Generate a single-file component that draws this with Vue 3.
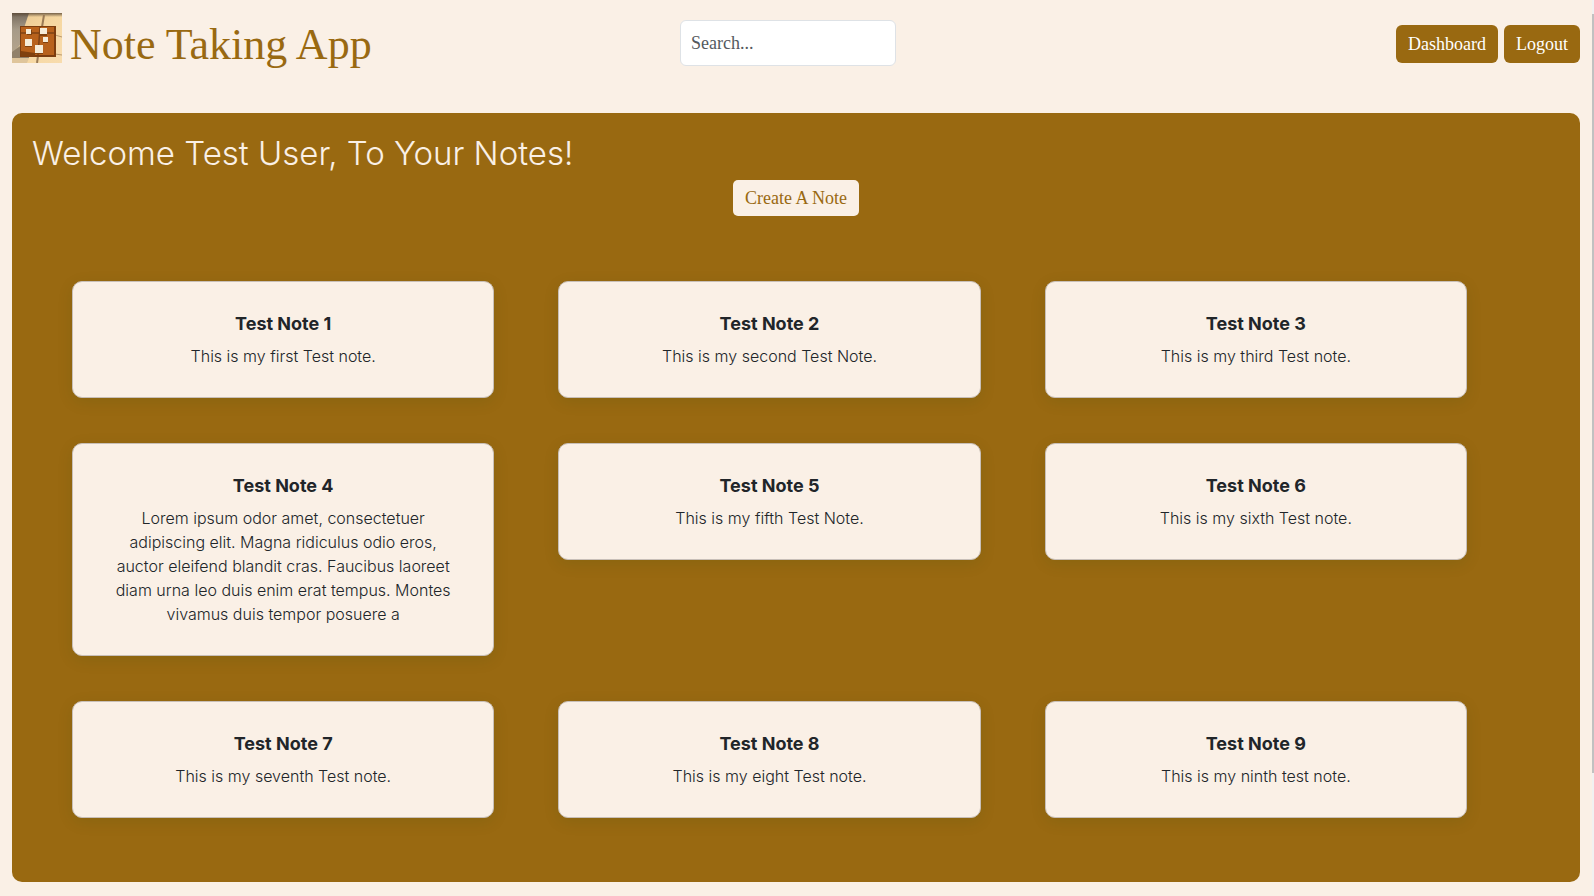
<script setup>
import { ref } from 'vue'

const query = ref('')
const notes = [
  { title: 'Test Note 1', body: 'This is my first Test note.' },
  { title: 'Test Note 2', body: 'This is my second Test Note.' },
  { title: 'Test Note 3', body: 'This is my third Test note.' },
  {
    title: 'Test Note 4',
    body: 'Lorem ipsum odor amet, consectetuer\nadipiscing elit. Magna ridiculus odio eros,\nauctor eleifend blandit cras. Faucibus laoreet\ndiam urna leo duis enim erat tempus. Montes\nvivamus duis tempor posuere a'
  },
  { title: 'Test Note 5', body: 'This is my fifth Test Note.' },
  { title: 'Test Note 6', body: 'This is my sixth Test note.' },
  { title: 'Test Note 7', body: 'This is my seventh Test note.' },
  { title: 'Test Note 8', body: 'This is my eight Test note.' },
  { title: 'Test Note 9', body: 'This is my ninth test note.' }
]
</script>

<template>
  <div class="page">
    <header class="topbar">
      <div class="brand">
        <svg class="logo" viewBox="0 0 50 50" aria-hidden="true">
          <defs>
            <linearGradient id="wall" x1="0" y1="0" x2="1" y2="1">
              <stop offset="0" stop-color="#e9c78f" />
              <stop offset="0.5" stop-color="#f6d7a0" />
              <stop offset="1" stop-color="#f8dcae" />
            </linearGradient>
            <linearGradient id="shade" x1="0" y1="0" x2="0" y2="1">
              <stop offset="0" stop-color="#766a5c" />
              <stop offset="0.4" stop-color="#a69a88" />
              <stop offset="1" stop-color="#b5a58d" />
            </linearGradient>
            <linearGradient id="top" x1="0" y1="0" x2="0" y2="1">
              <stop offset="0" stop-color="#5d4b38" stop-opacity="0.85" />
              <stop offset="1" stop-color="#5d4b38" stop-opacity="0" />
            </linearGradient>
          </defs>
          <rect width="50" height="50" fill="url(#wall)" />
          <path d="M0 0H17L10 21 8 32 0 41Z" fill="url(#shade)" />
          <path d="M0 39L8 33V44H17V45H0Z" fill="#91816a" />
          <path d="M0 45H17L15 50H0Z" fill="#dfc59b" />
          <rect width="50" height="4" fill="url(#top)" />
          <path d="M32 2L30 14M26 43L25 50" stroke="#9a7a55" stroke-width="2" fill="none" />
          <path d="M43 22L50 24M43 41L50 42" stroke="#b8986e" stroke-width="1" fill="none" />
          <rect x="8" y="13" width="36" height="31" fill="#7c3d0e" />
          <rect x="9" y="14" width="33" height="28" fill="#b8621c" />
          <path d="M9 20H42M28 14L26 42" stroke="#7e4315" stroke-width="1.5" />
          <path d="M9 38L23 40V43H9Z" fill="#80410f" />
          <g fill="#80420f">
            <rect x="15" y="17" width="5" height="5" />
            <rect x="28" y="16" width="7" height="7" />
            <rect x="13" y="28" width="7" height="6" />
            <rect x="31" y="25" width="5" height="5" />
            <rect x="23" y="34" width="8" height="7" />
          </g>
          <g fill="#f6ecd8">
            <rect x="14" y="16" width="5" height="5" />
            <rect x="28" y="15" width="7" height="6" />
            <rect x="13" y="26" width="7" height="7" />
            <rect x="31" y="24" width="5" height="5" />
            <rect x="23" y="32" width="8" height="8" />
          </g>
        </svg>
        <h1 class="app-name">Note Taking App</h1>
      </div>
      <form class="search" role="search" @submit.prevent>
        <input v-model="query" class="search-input" type="search" placeholder="Search..." aria-label="Search notes" />
      </form>
      <nav class="actions">
        <button class="btn" type="button">Dashboard</button>
        <button class="btn" type="button">Logout</button>
      </nav>
    </header>

    <main class="panel">
      <h2 class="welcome">Welcome Test User, To Your Notes!</h2>
      <button class="btn create" type="button">Create A Note</button>
      <section class="notes">
        <article v-for="note in notes" :key="note.title" class="note">
          <h3 class="note-title">{{ note.title }}</h3>
          <p class="note-body">{{ note.body }}</p>
        </article>
      </section>
    </main>

    <div class="scroll-track" aria-hidden="true"><div class="scroll-thumb"></div></div>
  </div>
</template>

<style>
body {
  margin: 0;
  background: #faf0e6;
}
</style>

<style scoped>
.page {
  box-sizing: border-box;
  padding: 13px 14px 14px 12px;
  color: #212529;
  font-family: Inter, "Open Sans", sans-serif;
  font-weight: 300;
}
.topbar {
  display: grid;
  grid-template-columns: 1fr 232px 1fr;
  align-items: start;
  height: 100px;
}
.brand {
  display: flex;
  gap: 8px;
}
.logo {
  width: 50px;
  height: 50px;
  flex: none;
}
.app-name {
  margin: 0;
  padding-top: 7px;
  color: #996911;
  font: 400 44px/50px "Liberation Serif", serif;
  white-space: nowrap;
}
.search {
  padding: 7px 16px 0 0;
}
.search-input {
  box-sizing: border-box;
  display: block;
  width: 100%;
  height: 46px;
  padding: 0 10px;
  border: 1px solid #dee2e6;
  border-radius: 6px;
  background: #fff;
  color: #212529;
  font: 400 18px/24px "Liberation Serif", serif;
  appearance: none;
}
.search-input::placeholder {
  color: #54595e;
  opacity: 1;
}
.actions {
  display: flex;
  justify-content: flex-end;
  gap: 6px;
  padding-top: 12px;
}
.btn {
  padding: 7px 12px;
  border: 0;
  border-radius: 6px;
  background: #996911;
  color: #fff;
  font: 400 18px/24px "Liberation Serif", serif;
}
.panel {
  display: flex;
  flex-direction: column;
  padding: 20px 20px 64px;
  border-radius: 10px;
  background: #996911;
}
.welcome {
  margin: 0;
  color: #faf0e6;
  font-size: 33px;
  font-weight: 300;
  line-height: 40px;
}
.create {
  align-self: center;
  margin-top: 7px;
  padding: 6px 12px;
  border-radius: 5px;
  background: #faf0e6;
  color: #996911;
}
.notes {
  display: grid;
  grid-template-columns: repeat(3, minmax(0, 1fr));
  gap: 45px 64px;
  align-items: start;
  margin: 65px 93px 0 40px;
}
.note {
  padding: 30px 20px 29px;
  border: 1px solid #c8bfb8;
  border-radius: 10px;
  background: #faf0e6;
  box-shadow: 0 4px 16px rgba(0, 64, 0, 0.1);
  text-align: center;
}
.note-title {
  margin: 0 0 8px;
  font-size: 18px;
  font-weight: 700;
  line-height: 24px;
}
.note-body {
  margin: 0;
  font-size: 16px;
  line-height: 24px;
  white-space: pre-line;
}
.scroll-track {
  position: fixed;
  top: 0;
  right: 0;
  bottom: 0;
  width: 2px;
  padding-top: 14px;
  background: #f1f1f1;
}
.scroll-thumb {
  height: 86%;
  background: #c1c1c1;
}
</style>
